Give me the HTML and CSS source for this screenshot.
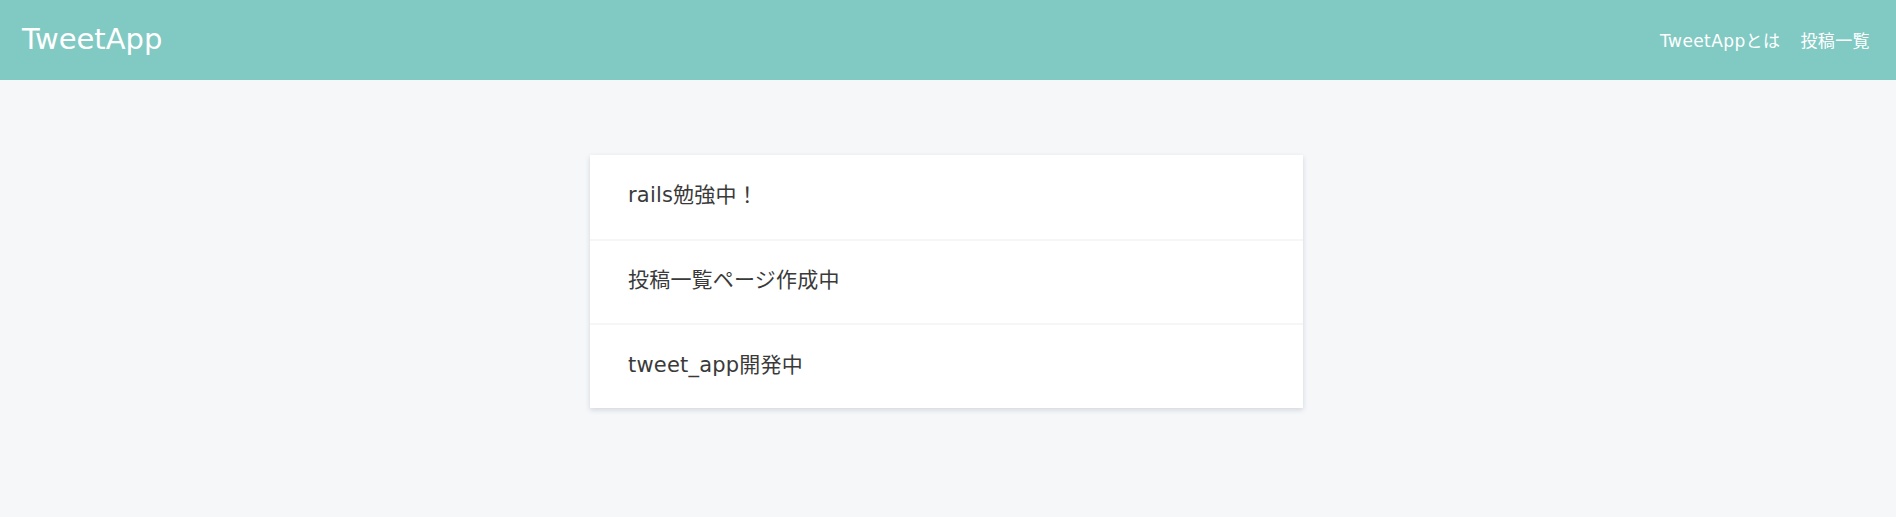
FILE: index.html
```html
<!DOCTYPE html>
<html lang="ja">
<head>
<meta charset="utf-8">
<title>TweetApp</title>
<link rel="stylesheet" href="styles.css">
</head>
<body>
<header class="header">
  <div class="logo">TweetApp</div>
  <nav class="nav">
    <a class="nav-link" href="#">TweetAppとは</a>
    <a class="nav-link" href="#">投稿一覧</a>
  </nav>
</header>
<main class="main">
  <div class="posts">
    <div class="post">rails勉強中！</div>
    <div class="post">投稿一覧ページ作成中</div>
    <div class="post">tweet_app開発中</div>
  </div>
</main>
</body>
</html>
```
FILE: styles.css
```css
* { box-sizing: border-box; }
html, body {
  margin: 0;
  padding: 0;
}
body {
  background: #f5f7f9;
  font-family: "DejaVu Sans", "Noto Sans CJK JP", sans-serif;
  color: #333;
  height: 517px;
}
.header {
  height: 80px;
  background: #81cac3;
  display: flex;
  align-items: center;
  justify-content: space-between;
  padding: 0 26px 0 22px;
}
.logo {
  color: #fff;
  font-size: 29px;
  margin-top: -3px;
}
.nav {
  display: flex;
  gap: 20px;
  margin-top: -2px;
}
.nav-link {
  color: #fff;
  text-decoration: none;
  font-size: 17px;
  letter-spacing: 0.4px;
}
.main {
  padding-top: 75px;
  display: flex;
  justify-content: center;
}
.posts {
  width: 713px;
  margin-left: -3px;
  background: #fff;
  box-shadow: 0 2px 5px rgba(60, 70, 90, 0.18);
}
.post {
  height: 84px;
  display: flex;
  align-items: center;
  padding: 0 38px 8px;
  font-size: 21px;
  letter-spacing: 0.2px;
  color: #3a3a3a;
  border-top: 2px solid #f6f6f6;
}
.post:last-child { height: 85px; }
.post:first-child { border-top: none; }
```
